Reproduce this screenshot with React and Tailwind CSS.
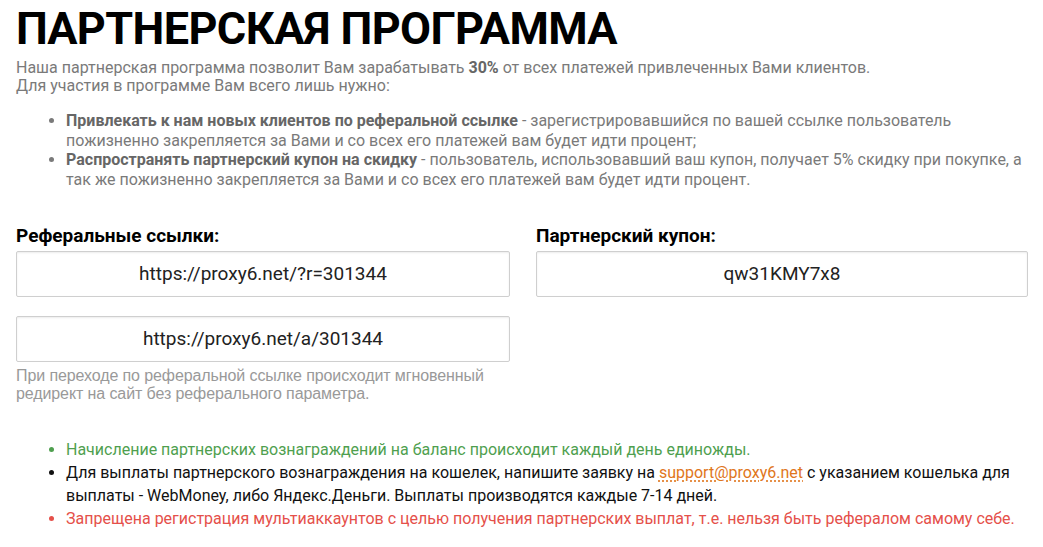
import React from "react";

export default function App() {
  return (
    <div className="bg-white w-[1043px] h-[547px] overflow-hidden px-[16px] pt-[2px]" style={{ fontFamily: "Roboto, 'Noto Sans', sans-serif" }}>
      <h1 className="text-[45px] leading-[54px] font-bold text-black tracking-[-0.6px]">ПАРТНЕРСКАЯ ПРОГРАММА</h1>
      <p className="text-[16px] leading-[18px] text-[#7a7a7a] mt-[3px]">
        Наша партнерская программа позволит Вам зарабатывать <b className="text-[#666]">30%</b> от всех платежей привлеченных Вами клиентов.
        <br />
        Для участия в программе Вам всего лишь нужно:
      </p>
      <ul className="list-disc pl-[50px] mt-[16px] text-[16px] leading-[19.5px] text-[#7a7a7a] marker:text-[#7a7a7a]">
        <li className="pr-[60px]">
          <b className="text-[#666]">Привлекать к нам новых клиентов по реферальной ссылке</b> - зарегистрировавшийся по вашей ссылке пользователь пожизненно закрепляется за Вами и со всех его платежей вам будет идти процент;
        </li>
        <li className="mr-[-6px]">
          <b className="text-[#666]">Распространять партнерский купон на скидку</b> - пользователь, использовавший ваш купон, получает 5% скидку при покупке, а так же пожизненно закрепляется за Вами и со всех его платежей вам будет идти процент.
        </li>
      </ul>

      <div className="grid grid-cols-[494px_492px] gap-x-[26px] mt-[35px]">
        <div>
          <div className="text-[19px] leading-[24px] font-bold text-black">Реферальные ссылки:</div>
          <div className="mt-[3px] h-[46px] border border-[#cfcfcf] rounded-[2px] shadow-[inset_0_1px_2px_rgba(0,0,0,0.08)] flex items-center justify-center text-[19px] text-[#222]">
            https://proxy6.net/?r=301344
          </div>
          <div className="mt-[19px] h-[46px] border border-[#cfcfcf] rounded-[2px] shadow-[inset_0_1px_2px_rgba(0,0,0,0.08)] flex items-center justify-center text-[19px] text-[#222]">
            https://proxy6.net/a/301344
          </div>
          <p className="mt-[5px] text-[16px] leading-[18px] text-[#999] tracking-[-0.1px]" style={{ fontFamily: "'Liberation Sans', Arial, sans-serif" }}>
            При переходе по реферальной ссылке происходит мгновенный редирект на сайт без реферального параметра.
          </p>
        </div>
        <div>
          <div className="text-[19px] leading-[24px] font-bold text-black">Партнерский купон:</div>
          <div className="mt-[3px] h-[46px] border border-[#cfcfcf] rounded-[2px] shadow-[inset_0_1px_2px_rgba(0,0,0,0.08)] flex items-center justify-center text-[19px] text-[#222]">
            qw31KMY7x8
          </div>
        </div>
      </div>

      <ul className="list-disc pl-[50px] mt-[35px] text-[16px] leading-[23px]">
        <li className="text-[#4f9f4f]">Начисление партнерских вознаграждений на баланс происходит каждый день единожды.</li>
        <li className="text-[#111] pr-[10px]">
          Для выплаты партнерского вознаграждения на кошелек, напишите заявку на{" "}
          <a className="text-[#e0761c] underline decoration-dotted underline-offset-[3px]">support@proxy6.net</a> с указанием кошелька для выплаты - WebMoney, либо Яндекс.Деньги. Выплаты производятся каждые 7-14 дней.
        </li>
        <li className="text-[#e5504a]">Запрещена регистрация мультиаккаунтов с целью получения партнерских выплат, т.е. нельзя быть рефералом самому себе.</li>
      </ul>
    </div>
  );
}
